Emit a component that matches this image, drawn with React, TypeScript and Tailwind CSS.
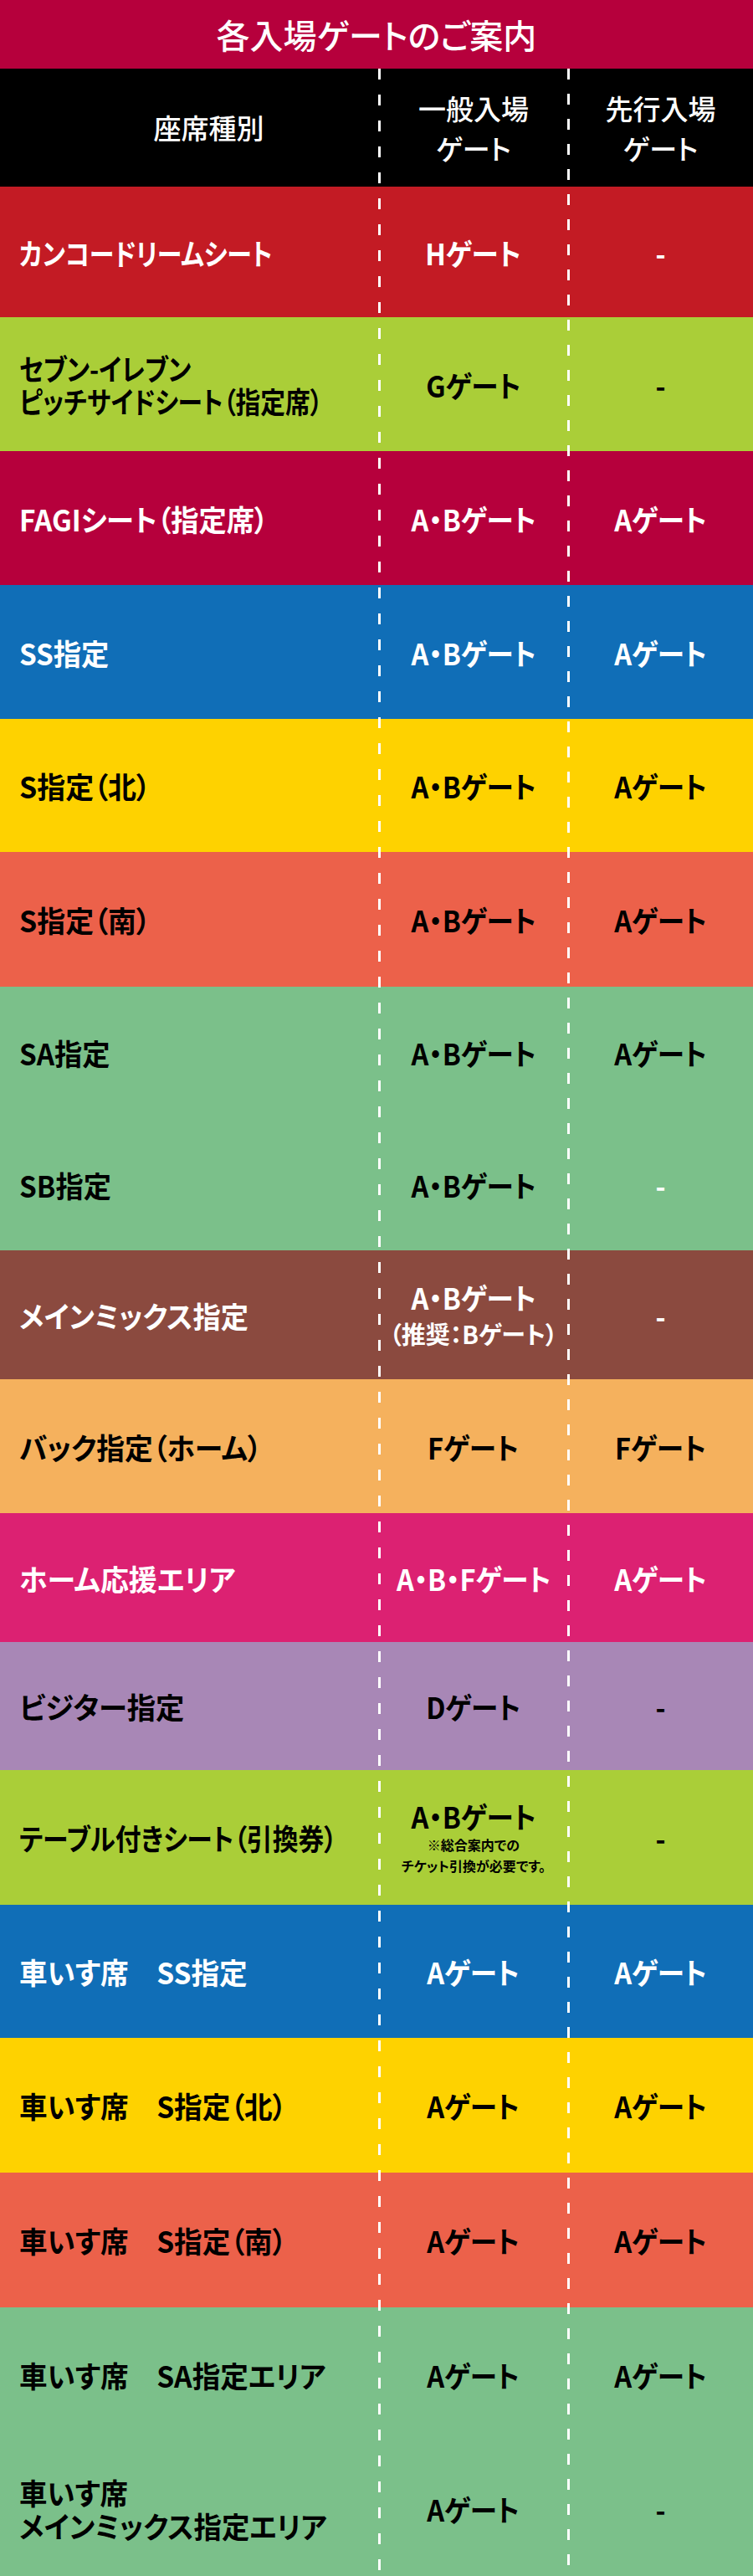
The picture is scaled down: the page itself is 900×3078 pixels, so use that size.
type Row = {
  h: string;
  bg: string;
  fg: string;
  sx: string;
  seat: string[];
  lineCls?: string[];
  gate: string[];
  note?: string[];
  sub?: string;
  pre: string;
  preFg?: string;
};

// sx: horizontal squeeze of the seat label, tuned per row to the original's condensed face
const rows: Row[] = [
  { h: "h-[156px]", bg: "bg-[#c31b24]", fg: "text-white", sx: "scale-x-[0.855]", seat: ["カンコードリームシート"], gate: ["Hゲート"], pre: "-" },
  {
    h: "h-[160px]",
    bg: "bg-[#aace38]",
    fg: "text-black",
    sx: "text-[33px] leading-[37px]",
    seat: ["セブン-イレブン", "ピッチサイドシート（指定席）"],
    lineCls: ["scale-x-[0.86]", "scale-x-[0.85]"],
    gate: ["Gゲート"],
    pre: "-",
  },
  { h: "h-[160px]", bg: "bg-[#b6003c]", fg: "text-white", sx: "scale-x-[0.95]", seat: ["FAGIシート（指定席）"], gate: ["A・Bゲート"], pre: "Aゲート" },
  { h: "h-[160px]", bg: "bg-[#106eb7]", fg: "text-white", sx: "scale-x-[0.95]", seat: ["SS指定"], gate: ["A・Bゲート"], pre: "Aゲート" },
  { h: "h-[159px]", bg: "bg-[#fed200]", fg: "text-black", sx: "scale-x-[0.97]", seat: ["S指定（北）"], gate: ["A・Bゲート"], pre: "Aゲート" },
  { h: "h-[161px]", bg: "bg-[#ec614a]", fg: "text-black", sx: "scale-x-[0.97]", seat: ["S指定（南）"], gate: ["A・Bゲート"], pre: "Aゲート" },
  { h: "h-[157px]", bg: "bg-[#7bc08a]", fg: "text-black", sx: "scale-x-[0.95]", seat: ["SA指定"], gate: ["A・Bゲート"], pre: "Aゲート" },
  { h: "h-[158px]", bg: "bg-[#7bc08a]", fg: "text-black", sx: "scale-x-[0.95]", seat: ["SB指定"], gate: ["A・Bゲート"], pre: "-", preFg: "text-white" },
  {
    h: "h-[154px]",
    bg: "bg-[#8b4a3f]",
    fg: "text-white",
    sx: "scale-x-[0.95]",
    seat: ["メインミックス指定"],
    gate: ["A・Bゲート"],
    sub: "（推奨：Bゲート）",
    pre: "-",
  },
  { h: "h-[160px]", bg: "bg-[#f5b15d]", fg: "text-black", sx: "scale-x-[0.965]", seat: ["バック指定（ホーム）"], gate: ["Fゲート"], pre: "Fゲート" },
  { h: "h-[154px]", bg: "bg-[#dc2172]", fg: "text-white", sx: "scale-x-[0.97]", seat: ["ホーム応援エリア"], gate: ["A・B・Fゲート"], pre: "Aゲート" },
  { h: "h-[153px]", bg: "bg-[#a887b6]", fg: "text-black", sx: "scale-x-[0.98]", seat: ["ビジター指定"], gate: ["Dゲート"], pre: "-" },
  {
    h: "h-[161px]",
    bg: "bg-[#aace38]",
    fg: "text-black",
    sx: "scale-x-[0.88]",
    seat: ["テーブル付きシート（引換券）"],
    gate: ["A・Bゲート"],
    note: ["※総合案内での", "チケット引換が必要です。"],
    pre: "-",
  },
  { h: "h-[159px]", bg: "bg-[#106eb7]", fg: "text-white", sx: "scale-x-[0.96]", seat: ["車いす席　SS指定"], gate: ["Aゲート"], pre: "Aゲート" },
  { h: "h-[161px]", bg: "bg-[#fed200]", fg: "text-black", sx: "scale-x-[0.96]", seat: ["車いす席　S指定（北）"], gate: ["Aゲート"], pre: "Aゲート" },
  { h: "h-[161px]", bg: "bg-[#ec614a]", fg: "text-black", sx: "scale-x-[0.96]", seat: ["車いす席　S指定（南）"], gate: ["Aゲート"], pre: "Aゲート" },
  { h: "h-[160px]", bg: "bg-[#7bc08a]", fg: "text-black", sx: "scale-x-[0.96]", seat: ["車いす席　SA指定エリア"], gate: ["Aゲート"], pre: "Aゲート" },
  {
    h: "h-[161px]",
    bg: "bg-[#7bc08a]",
    fg: "text-black",
    sx: "scale-x-[0.955] leading-[40px]",
    seat: ["車いす席", "メインミックス指定エリア"],
    gate: ["Aゲート"],
    pre: "-",
  },
];

function GateCell({ row }: { row: Row }) {
  return (
    <div className="flex flex-col items-center justify-center text-center">
      {row.gate.map((g) => (
        <span
          key={g}
          className={`inline-block scale-x-[0.93] text-[35px] font-bold ${row.sub || row.note ? "leading-[42px]" : "leading-none"}`}
        >
          {g}
        </span>
      ))}
      {row.sub ? <span className="mt-[2px] text-[29px] font-bold leading-[40px]">{row.sub}</span> : null}
      {row.note ? (
        <div className="mt-[1px] flex flex-col items-center">
          {row.note.map((n) => (
            <span key={n} className="text-[16px] font-bold leading-[25px]">
              {n}
            </span>
          ))}
        </div>
      ) : null}
    </div>
  );
}

export default function App() {
  return (
    <div className="w-[900px] font-['Noto_Sans_CJK_JP','Noto_Sans_CJK_SC',sans-serif] [font-feature-settings:'palt']">
      <div className="flex h-[82px] items-center justify-center bg-[#b6003c] text-white">
        <h1 className="text-[40px] font-medium leading-none">各入場ゲートのご案内</h1>
      </div>

      <div className="relative">
        <div className="grid h-[141px] grid-cols-[453px_226px_221px] bg-black text-white">
          <div className="flex items-center justify-center pl-[46px] text-[33px] font-medium">座席種別</div>
          <div className="flex flex-col items-center justify-center text-[33px] font-medium leading-[48px]">
            <span>一般入場</span>
            <span>ゲート</span>
          </div>
          <div className="flex flex-col items-center justify-center text-[33px] font-medium leading-[48px]">
            <span>先行入場</span>
            <span>ゲート</span>
          </div>
        </div>

        {rows.map((row, i) => (
          <div key={i} className={`grid grid-cols-[453px_226px_221px] ${row.h} ${row.bg} ${row.fg}`}>
            <div className="flex flex-col justify-center pl-[23px]">
              <div className={`origin-left text-[35px] font-bold leading-[39px] ${row.sx}`}>
                {row.seat.map((s, j) => (
                  <div key={s} className={`origin-left whitespace-nowrap ${row.lineCls?.[j] ?? ""}`}>
                    {s}
                  </div>
                ))}
              </div>
            </div>
            <GateCell row={row} />
            <div className={`flex items-center justify-center ${row.preFg ?? ""}`}>
              <span className="inline-block scale-x-[0.93] text-[35px] font-bold leading-none">{row.pre}</span>
            </div>
          </div>
        ))}

        <div className="pointer-events-none absolute top-0 bottom-0 left-[452px] w-[3px] bg-[repeating-linear-gradient(to_bottom,#fff_0px,#fff_13px,transparent_13px,transparent_31px)]" />
        <div className="pointer-events-none absolute top-0 bottom-0 left-[678px] w-[3px] bg-[repeating-linear-gradient(to_bottom,#fff_0px,#fff_13px,transparent_13px,transparent_30px)]" />
      </div>
    </div>
  );
}
